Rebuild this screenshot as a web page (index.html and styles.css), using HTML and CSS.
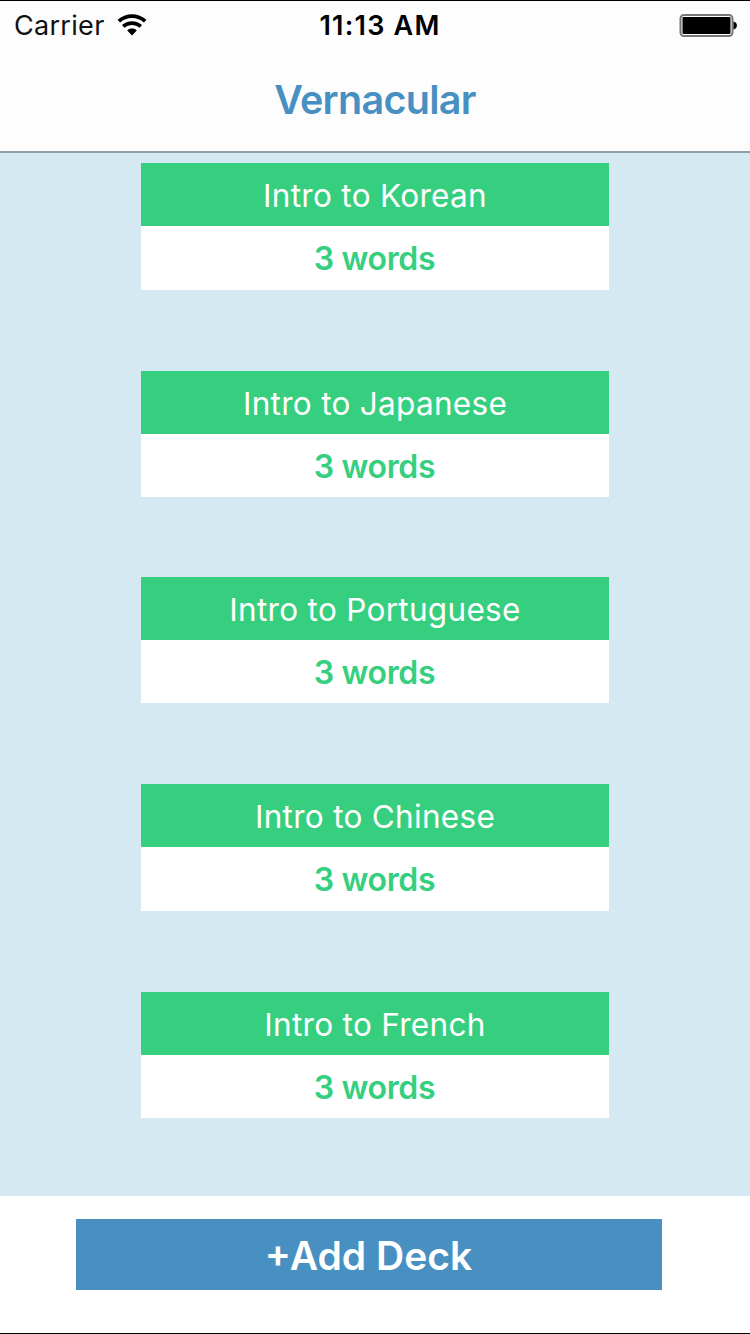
FILE: index.html
```html
<!DOCTYPE html>
<html lang="en">
<head>
<meta charset="utf-8">
<title>Vernacular</title>
<link rel="stylesheet" href="styles.css">
</head>
<body>
<div class="screen">
  <header class="header">
    <div class="status">
      <div class="status-left">
        <span class="carrier">Carrier</span>
        <svg class="wifi" width="30" height="22" viewBox="0 0 30 22">
          <g fill="none" stroke="#000" stroke-width="3.7">
            <path d="M1.8 7.2C9.2.4 20.8.4 28.2 7.2"/>
            <path d="M6.2 12.4C11.2 7.9 18.8 7.9 23.8 12.4"/>
          </g>
          <path d="M10.2 16.4C12.8 14 17.2 14 19.8 16.4L15 21.4Z"/>
        </svg>
      </div>
      <span class="time">11:13 AM</span>
      <svg class="battery" width="58" height="24" viewBox="0 0 58 24">
        <rect x="0.5" y="1" width="52" height="21" rx="3.5" fill="#fff" stroke="#77777b" stroke-width="2"/>
        <rect x="2.5" y="3" width="48" height="17" rx="1"/>
        <path d="M53.5 7.5C58 8 58 15 53.5 15.5Z"/>
      </svg>
    </div>
    <h1 class="title">Vernacular</h1>
  </header>
  <main class="decks">
    <section class="deck deck-tall"><h2 class="deck-name">Intro to Korean</h2><p class="deck-count">3 words</p></section>
    <section class="deck"><h2 class="deck-name">Intro to Japanese</h2><p class="deck-count">3 words</p></section>
    <section class="deck deck-tight"><h2 class="deck-name">Intro to Portuguese</h2><p class="deck-count">3 words</p></section>
    <section class="deck deck-tall"><h2 class="deck-name">Intro to Chinese</h2><p class="deck-count">3 words</p></section>
    <section class="deck"><h2 class="deck-name">Intro to French</h2><p class="deck-count">3 words</p></section>
  </main>
  <footer class="footer">
    <button class="add">+Add Deck</button>
  </footer>
</div>
</body>
</html>
```
FILE: styles.css
```css
* { box-sizing: border-box; margin: 0; padding: 0; }
body { font-family: Inter, "Liberation Sans", sans-serif; background: #fff; }
.screen {
  display: flex;
  flex-direction: column;
  width: 750px;
  height: 1334px;
  border-top: 1px solid #000;
  border-bottom: 1px solid #000;
  overflow: hidden;
}
.header {
  height: 152px;
  background: #fdfdfe;
  border-bottom: 2px solid #939fa8;
}
.status {
  display: grid;
  grid-template-columns: 1fr auto 1fr;
  align-items: center;
  height: 49px;
  padding: 0 12px 0 14px;
  color: #111;
}
.status-left { display: flex; align-items: center; gap: 12px; }
.wifi { margin-top: -1px; }
.carrier { font-size: 27px; letter-spacing: 0.3px; }
.time { padding-left: 8px; font-size: 27px; font-weight: 600; letter-spacing: 1.2px; color: #000; }
.battery { justify-self: end; overflow: visible; }
.title {
  line-height: 50px;
  padding-top: 25px;
  text-align: center;
  font-size: 39.5px;
  font-weight: 600;
  letter-spacing: -0.7px;
  color: #4990c2;
}
.decks {
  display: flex;
  flex-direction: column;
  align-items: center;
  gap: 81px;
  height: 1043px;
  padding-top: 10px;
  background: #d5e9f2;
}
.deck { width: 468px; height: 126px; background: #fff; text-align: center; }
.deck-tall { height: 127px; }
.deck-tight { margin-top: -1px; }
.deck-name {
  height: 63px;
  line-height: 65px;
  background: #36cf80;
  color: #fff;
  font-size: 31.5px;
  font-weight: 400;
  letter-spacing: 0.3px;
}
.deck-count {
  line-height: 66px;
  margin-left: -1px;
  color: #36cf80;
  font-size: 32px;
  font-weight: 600;
  letter-spacing: -0.35px;
}
.footer { flex: 1; padding: 23px 88px 0 76px; background: #fff; }
.add {
  display: block;
  width: 586px;
  height: 71px;
  padding: 1px 1px 0 0;
  border: 0;
  background: #4990c2;
  color: #fff;
  font: 600 39px Inter, "Liberation Sans", sans-serif;
}
```
